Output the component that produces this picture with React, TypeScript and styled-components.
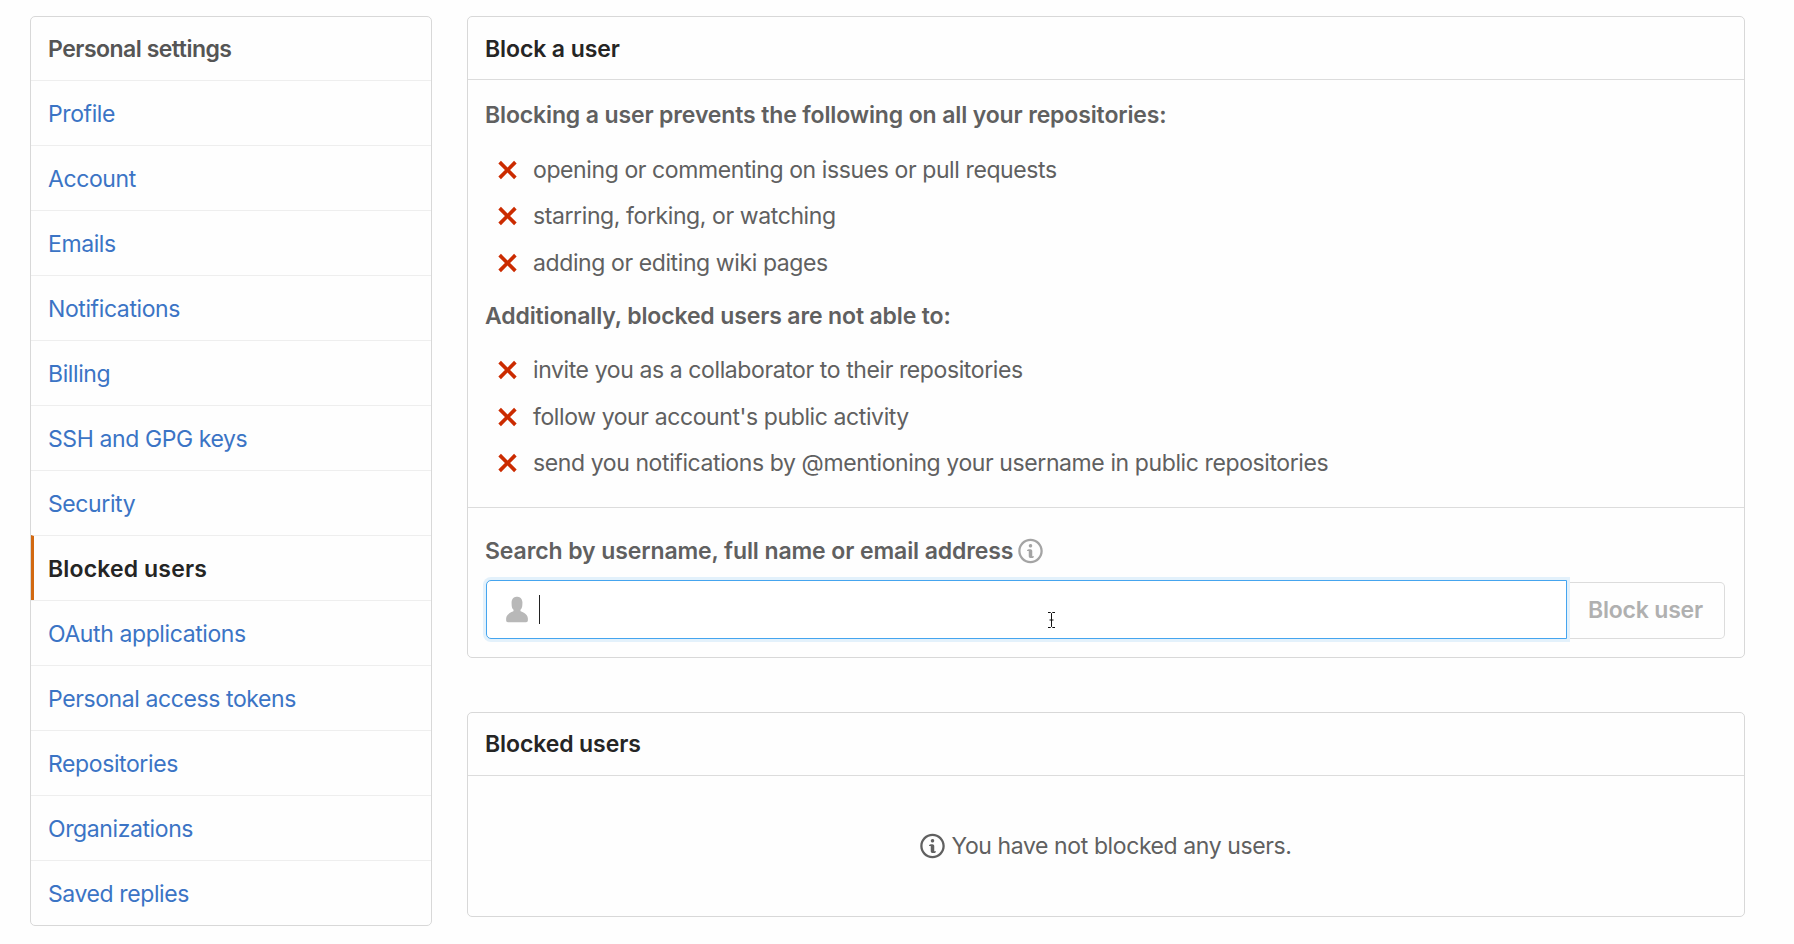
import styled, { createGlobalStyle } from 'styled-components';

const GlobalStyle = createGlobalStyle`
  html, body {
    margin: 0;
    padding: 0;
    background: #fefefe;
  }
  body {
    font-family: Inter, 'Liberation Sans', sans-serif;
    font-size: 23px;
    letter-spacing: -0.4px;
    color: #606060;
  }
  * {
    box-sizing: border-box;
  }
`;

const sideItems = [
  'Profile',
  'Account',
  'Emails',
  'Notifications',
  'Billing',
  'SSH and GPG keys',
  'Security',
  'Blocked users',
  'OAuth applications',
  'Personal access tokens',
  'Repositories',
  'Organizations',
  'Saved replies',
];

const blockedActions = [
  'opening or commenting on issues or pull requests',
  'starring, forking, or watching',
  'adding or editing wiki pages',
];

const otherActions = [
  'invite you as a collaborator to their repositories',
  "follow your account's public activity",
  'send you notifications by @mentioning your username in public repositories',
];

const XIcon = () => (
  <StyledXIcon viewBox="0 0 12 16">
    <path d="M7.48 8l3.75 3.75-1.48 1.48L6 9.48l-3.75 3.75-1.48-1.48L4.52 8 .77 4.25l1.48-1.48L6 6.52l3.75-3.75 1.48 1.48L7.48 8z" />
  </StyledXIcon>
);

const InfoIcon = ({ muted }: { muted?: boolean }) => (
  <StyledInfoIcon viewBox="0 0 14 16" $muted={muted}>
    <path d="M6.3 5.69a.942.942 0 0 1-.28-.7c0-.28.09-.52.28-.7.19-.18.42-.28.7-.28.28 0 .52.09.7.28.18.19.28.42.28.7 0 .28-.09.52-.28.7a1 1 0 0 1-.7.3c-.28 0-.52-.11-.7-.3zM8 7.99c-.02-.25-.11-.48-.31-.69-.2-.19-.42-.3-.69-.31H6c-.27.02-.48.13-.69.31-.2.2-.3.44-.31.69h1v3c.02.27.11.5.31.69.2.2.42.31.69.31h1c.27 0 .48-.11.69-.31.2-.19.3-.42.31-.69H8V7.98v.01zM7 2.3c-3.14 0-5.7 2.54-5.7 5.68 0 3.14 2.56 5.7 5.7 5.7s5.7-2.55 5.7-5.7c0-3.15-2.56-5.69-5.7-5.69v.01zM7 .98c3.86 0 7 3.14 7 7s-3.14 7-7 7-7-3.12-7-7 3.14-7 7-7z" />
  </StyledInfoIcon>
);

const App = () => {
  return (
    <>
      <GlobalStyle />
      <StyledPage>
        <StyledSidebar>
          <StyledSideHeader>Personal settings</StyledSideHeader>
          {sideItems.map(item => (
            <StyledSideItem key={item} $active={item === 'Blocked users'}>
              {item}
            </StyledSideItem>
          ))}
        </StyledSidebar>

        <StyledMain>
          <StyledPanel>
            <StyledPanelHeader>Block a user</StyledPanelHeader>
            <StyledRules>
              <StyledRulesTitle>Blocking a user prevents the following on all your repositories:</StyledRulesTitle>
              <StyledRuleList>
                {blockedActions.map(text => (
                  <StyledRule key={text}>
                    <XIcon />
                    {text}
                  </StyledRule>
                ))}
              </StyledRuleList>
              <StyledRulesTitle>Additionally, blocked users are not able to:</StyledRulesTitle>
              <StyledRuleList>
                {otherActions.map(text => (
                  <StyledRule key={text}>
                    <XIcon />
                    {text}
                  </StyledRule>
                ))}
              </StyledRuleList>
            </StyledRules>
            <StyledSearch>
              <StyledLabel>
                Search by username, full name or email address
                <InfoIcon muted />
              </StyledLabel>
              <StyledSearchRow>
                <StyledInput>
                  <StyledPersonIcon viewBox="0 0 12 16">
                    <path d="M12 14.002a.998.998 0 0 1-.998.998H1.001A1 1 0 0 1 0 13.999V13c0-2.633 4-4 4-4s.229-.409 0-1c-.841-.62-.944-1.59-1-4 .173-2.413 1.867-3 3-3s2.827.586 3 3c-.056 2.41-.159 3.38-1 4-.229.59 0 1 0 1s4 1.367 4 4v1.002z" />
                  </StyledPersonIcon>
                  <StyledCaret />
                  <StyledPointer viewBox="0 0 9 16">
                    <path d="M1 .5h2.5L4.5 1.5 5.5.5H8M4.5 1.5v13M1 15.5h2.5l1-1 1 1H8M2.5 8h4" />
                  </StyledPointer>
                </StyledInput>
                <StyledBlockButton>Block user</StyledBlockButton>
              </StyledSearchRow>
            </StyledSearch>
          </StyledPanel>

          <StyledPanel>
            <StyledPanelHeader>Blocked users</StyledPanelHeader>
            <StyledEmpty>
              <InfoIcon />
              You have not blocked any users.
            </StyledEmpty>
          </StyledPanel>
        </StyledMain>
      </StyledPage>
    </>
  );
};

export default App;

const StyledPage = styled.div`
  display: grid;
  grid-template-columns: 402px 1278px;
  column-gap: 35px;
  align-items: start;
  padding: 16px 0 0 30px;
`;

const StyledSidebar = styled.nav`
  border: 1px solid #d8d8d8;
  border-radius: 5px;
  overflow: hidden;
`;

const StyledSideHeader = styled.div`
  height: 63px;
  padding-left: 17px;
  display: flex;
  align-items: center;
  font-weight: 600;
  letter-spacing: -0.5px;
  color: #555;
`;

const StyledSideItem = styled.a<{ $active?: boolean }>`
  height: 65px;
  padding: 1px 0 0 ${({ $active }) => ($active ? '14px' : '17px')};
  display: flex;
  align-items: center;
  border-top: 1px solid #eeeeee;
  border-left: ${({ $active }) => ($active ? '3px solid #d26911' : 'none')};
  font-weight: ${({ $active }) => ($active ? 600 : 400)};
  letter-spacing: ${({ $active }) => ($active ? '0.15px' : '-0.4px')};
  color: ${({ $active }) => ($active ? '#252525' : '#3b74c5')};
`;

const StyledMain = styled.main`
  display: flex;
  flex-direction: column;
  gap: 54px;
`;

const StyledPanel = styled.section`
  border: 1px solid #d8d8d8;
  border-radius: 5px;
`;

const StyledPanelHeader = styled.h2`
  margin: 0;
  height: 63px;
  padding: 1px 0 0 17px;
  display: flex;
  align-items: center;
  border-bottom: 1px solid #dcdcdc;
  font-size: 23px;
  font-weight: 600;
  letter-spacing: -0.1px;
  color: #252525;
`;

const StyledRules = styled.div`
  padding: 19px 17px 20px;
  border-bottom: 1px solid #dcdcdc;
`;

const StyledRulesTitle = styled.p`
  margin: 0;
  line-height: 32px;
  font-weight: 600;
  letter-spacing: -0.13px;
  color: #606060;
`;

const StyledRuleList = styled.ul`
  margin: 15.5px 0 13.5px;
  padding: 0;
  list-style: none;

  &:last-child {
    margin-bottom: 0;
  }
`;

const StyledRule = styled.li`
  height: 46.5px;
  display: flex;
  align-items: center;
  gap: 15.5px;
  padding-left: 11.5px;
`;

const StyledXIcon = styled.svg`
  width: 21px;
  height: 28px;
  fill: #cb2b00;
  flex: none;
`;

const StyledInfoIcon = styled.svg<{ $muted?: boolean }>`
  width: 25px;
  height: 28px;
  flex: none;
  fill: ${({ $muted }) => ($muted ? '#a4a4a4' : '#606060')};
`;

const StyledSearch = styled.div`
  padding: 27px 19px 18px 17px;
`;

const StyledLabel = styled.label`
  display: flex;
  align-items: center;
  gap: 5px;
  height: 32px;
  font-weight: 600;
  letter-spacing: -0.1px;
  color: #606060;
`;

const StyledSearchRow = styled.div`
  display: flex;
  align-items: stretch;
  margin: 13px 0 0 1px;
  height: 59px;
`;

const StyledInput = styled.div`
  position: relative;
  z-index: 1;
  width: 1081px;
  display: flex;
  align-items: center;
  gap: 11px;
  padding-left: 19px;
  background: #fff;
  border: 1.5px solid #45a5ef;
  border-radius: 5px 0 0 5px;
  box-shadow: 0 0 0 3px #e3f1fb;
`;

const StyledPersonIcon = styled.svg`
  width: 22px;
  height: 29px;
  fill: #b8b8b8;
  flex: none;
`;

const StyledCaret = styled.span`
  width: 1px;
  height: 29px;
  background: #222;
`;

const StyledPointer = styled.svg`
  position: absolute;
  left: 560px;
  top: 31px;
  width: 9px;
  height: 16px;
  fill: none;
  stroke: #111;
  stroke-width: 1;
`;

const StyledBlockButton = styled.button`
  flex: 1;
  margin-top: 2px;
  padding: 0;
  background: #fefefe;
  border: 1px solid #dcdcdc;
  border-left: none;
  border-radius: 0 5px 5px 0;
  font: inherit;
  letter-spacing: -0.2px;
  font-weight: 600;
  color: #b0b0b0;
`;

const StyledEmpty = styled.div`
  height: 140px;
  padding-top: 1px;
  display: flex;
  align-items: center;
  justify-content: center;
  gap: 6px;
`;
